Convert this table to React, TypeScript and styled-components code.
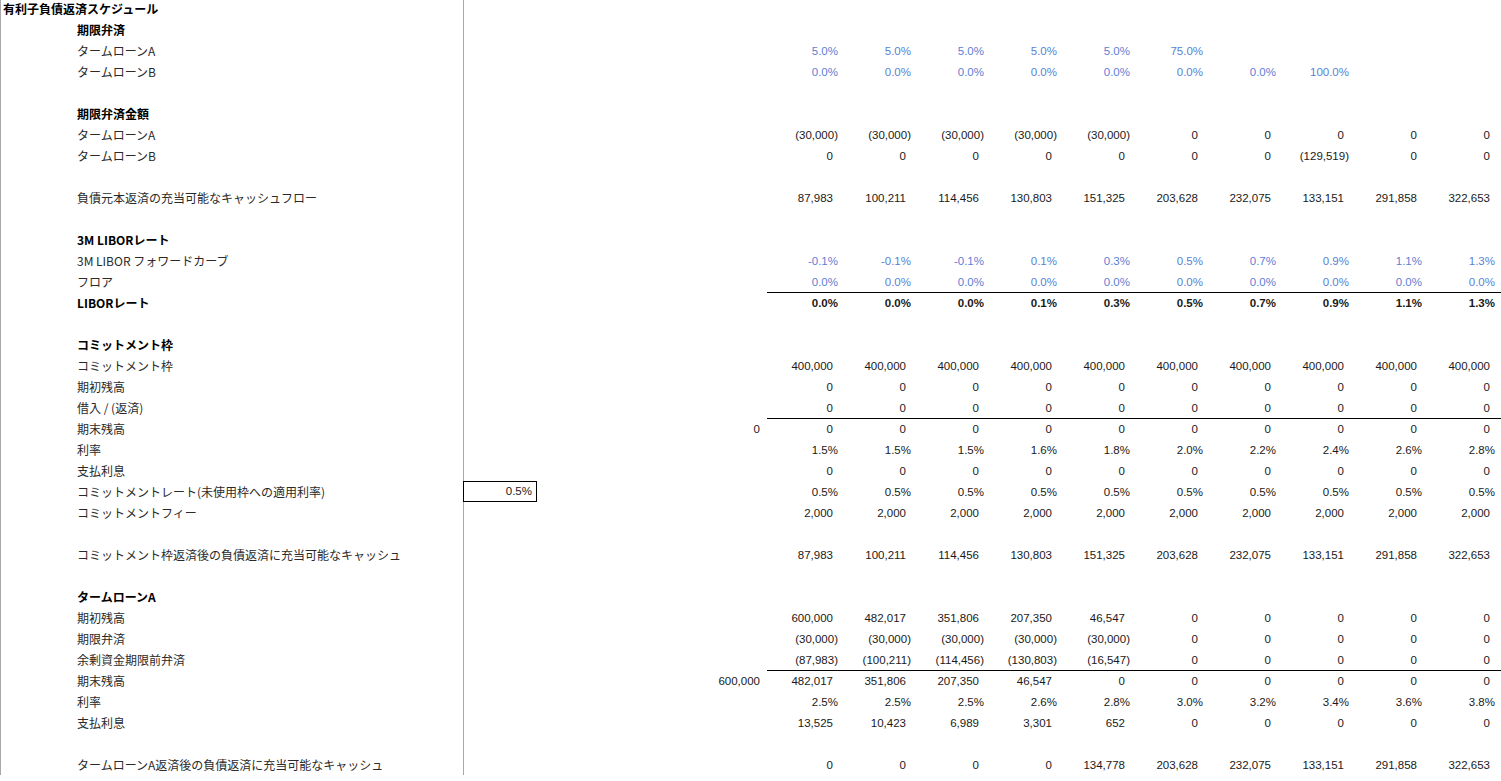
import React from "react";
import styled, { createGlobalStyle } from "styled-components";

type Line = {
  label?: string;
  title?: boolean;
  bold?: boolean;
  blue?: boolean;
  rule?: boolean;
  pre?: string;
  box?: string;
  values?: string[];
};

const rep = (v: string, n: number) => Array.from({ length: n }, () => v);

const lines: Line[] = [
  { label: "有利子負債返済スケジュール", title: true },
  { label: "期限弁済", bold: true },
  { label: "タームローンA", blue: true, values: [...rep("5.0%", 5), "75.0%", "", "", "", ""] },
  { label: "タームローンB", blue: true, values: [...rep("0.0%", 7), "100.0%", "", ""] },
  {},
  { label: "期限弁済金額", bold: true },
  { label: "タームローンA", values: [...rep("(30,000)", 5), ...rep("0", 5)] },
  { label: "タームローンB", values: [...rep("0", 7), "(129,519)", "0", "0"] },
  {},
  {
    label: "負債元本返済の充当可能なキャッシュフロー",
    values: ["87,983", "100,211", "114,456", "130,803", "151,325", "203,628", "232,075", "133,151", "291,858", "322,653"],
  },
  {},
  { label: "3M LIBORレート", bold: true },
  {
    label: "3M LIBOR フォワードカーブ",
    blue: true,
    values: ["-0.1%", "-0.1%", "-0.1%", "0.1%", "0.3%", "0.5%", "0.7%", "0.9%", "1.1%", "1.3%"],
  },
  { label: "フロア", blue: true, values: rep("0.0%", 10) },
  {
    label: "LIBORレート",
    bold: true,
    rule: true,
    values: ["0.0%", "0.0%", "0.0%", "0.1%", "0.3%", "0.5%", "0.7%", "0.9%", "1.1%", "1.3%"],
  },
  {},
  { label: "コミットメント枠", bold: true },
  { label: "コミットメント枠", values: rep("400,000", 10) },
  { label: "期初残高", values: rep("0", 10) },
  { label: "借入 / (返済)", values: rep("0", 10) },
  { label: "期末残高", rule: true, pre: "0", values: rep("0", 10) },
  {
    label: "利率",
    values: ["1.5%", "1.5%", "1.5%", "1.6%", "1.8%", "2.0%", "2.2%", "2.4%", "2.6%", "2.8%"],
  },
  { label: "支払利息", values: rep("0", 10) },
  { label: "コミットメントレート(未使用枠への適用利率)", box: "0.5%", values: rep("0.5%", 10) },
  { label: "コミットメントフィー", values: rep("2,000", 10) },
  {},
  {
    label: "コミットメント枠返済後の負債返済に充当可能なキャッシュ",
    values: ["87,983", "100,211", "114,456", "130,803", "151,325", "203,628", "232,075", "133,151", "291,858", "322,653"],
  },
  {},
  { label: "タームローンA", bold: true },
  {
    label: "期初残高",
    values: ["600,000", "482,017", "351,806", "207,350", "46,547", "0", "0", "0", "0", "0"],
  },
  { label: "期限弁済", values: [...rep("(30,000)", 5), ...rep("0", 5)] },
  {
    label: "余剰資金期限前弁済",
    values: ["(87,983)", "(100,211)", "(114,456)", "(130,803)", "(16,547)", ...rep("0", 5)],
  },
  {
    label: "期末残高",
    rule: true,
    pre: "600,000",
    values: ["482,017", "351,806", "207,350", "46,547", "0", "0", "0", "0", "0", "0"],
  },
  {
    label: "利率",
    values: ["2.5%", "2.5%", "2.5%", "2.6%", "2.8%", "3.0%", "3.2%", "3.4%", "3.6%", "3.8%"],
  },
  {
    label: "支払利息",
    values: ["13,525", "10,423", "6,989", "3,301", "652", "0", "0", "0", "0", "0"],
  },
  {},
  {
    label: "タームローンA返済後の負債返済に充当可能なキャッシュ",
    values: ["0", "0", "0", "0", "134,778", "203,628", "232,075", "133,151", "291,858", "322,653"],
  },
];

const GlobalStyle = createGlobalStyle`
  html, body {
    margin: 0;
    padding: 0;
    background: #ffffff;
  }
  body {
    font-family: "Noto Sans CJK JP", "Noto Sans", sans-serif;
    color: #1a1a1a;
    overflow: hidden;
  }
`;

const Sheet = styled.div`
  margin-top: -2px;
  width: 1501px;
`;

const Row = styled.div`
  display: grid;
  grid-template-columns: 464px 73px 157px 73px 1fr;
  height: 21px;
`;

const Label = styled.div<{ $title?: boolean; $bold?: boolean }>`
  box-sizing: border-box;
  border-left: 1px solid #a9a9a9;
  border-right: 1px solid #a9a9a9;
  padding-left: ${(p) => (p.$title ? "2px" : "76px")};
  font-size: 12px;
  line-height: 21px;
  font-weight: ${(p) => (p.$title || p.$bold ? 700 : 400)};
  color: ${(p) => (p.$title || p.$bold ? "#000" : "#2a2a2a")};
  white-space: nowrap;
`;

const Num = styled.div<{ $blue?: boolean; $bold?: boolean; $plain?: boolean }>`
  box-sizing: border-box;
  text-align: right;
  padding-right: ${(p) => (p.$plain ? "7px" : "2px")};
  font-family: "Liberation Sans", Arial, sans-serif;
  font-size: 11.5px;
  line-height: 20px;
  font-weight: ${(p) => (p.$bold ? 700 : 400)};
  color: ${(p) => (p.$blue ? "#5a7fd6" : "#1a1a1a")};
  white-space: nowrap;
`;

const InputBox = styled(Num)`
  margin-left: -1px;
  border: 1px solid #000;
  padding-right: 4px;
  line-height: 19px;
`;

const PreValue = styled(Num)`
  margin-top: 1px;
`;

const Values = styled.div<{ $rule?: boolean }>`
  display: grid;
  grid-template-columns: repeat(10, 73px);
  align-content: start;
  border-top: 1px solid ${(p) => (p.$rule ? "#000" : "transparent")};
`;

const isPlain = (v: string) => v !== "" && !v.endsWith(")") && !v.endsWith("%");

export default function App() {
  return (
    <>
      <GlobalStyle />
      <Sheet>
        {lines.map((l, i) => (
          <Row key={i}>
            <Label $title={l.title} $bold={l.bold}>
              {l.label}
            </Label>
            {l.box ? <InputBox>{l.box}</InputBox> : <div />}
            <div />
            <PreValue $plain={l.pre ? isPlain(l.pre) : false}>{l.pre}</PreValue>
            <Values $rule={l.rule}>
              {(l.values ?? []).map((v, j) => (
                <Num key={j} $blue={l.blue} $bold={l.bold} $plain={isPlain(v)}>
                  {v}
                </Num>
              ))}
            </Values>
          </Row>
        ))}
      </Sheet>
    </>
  );
}
